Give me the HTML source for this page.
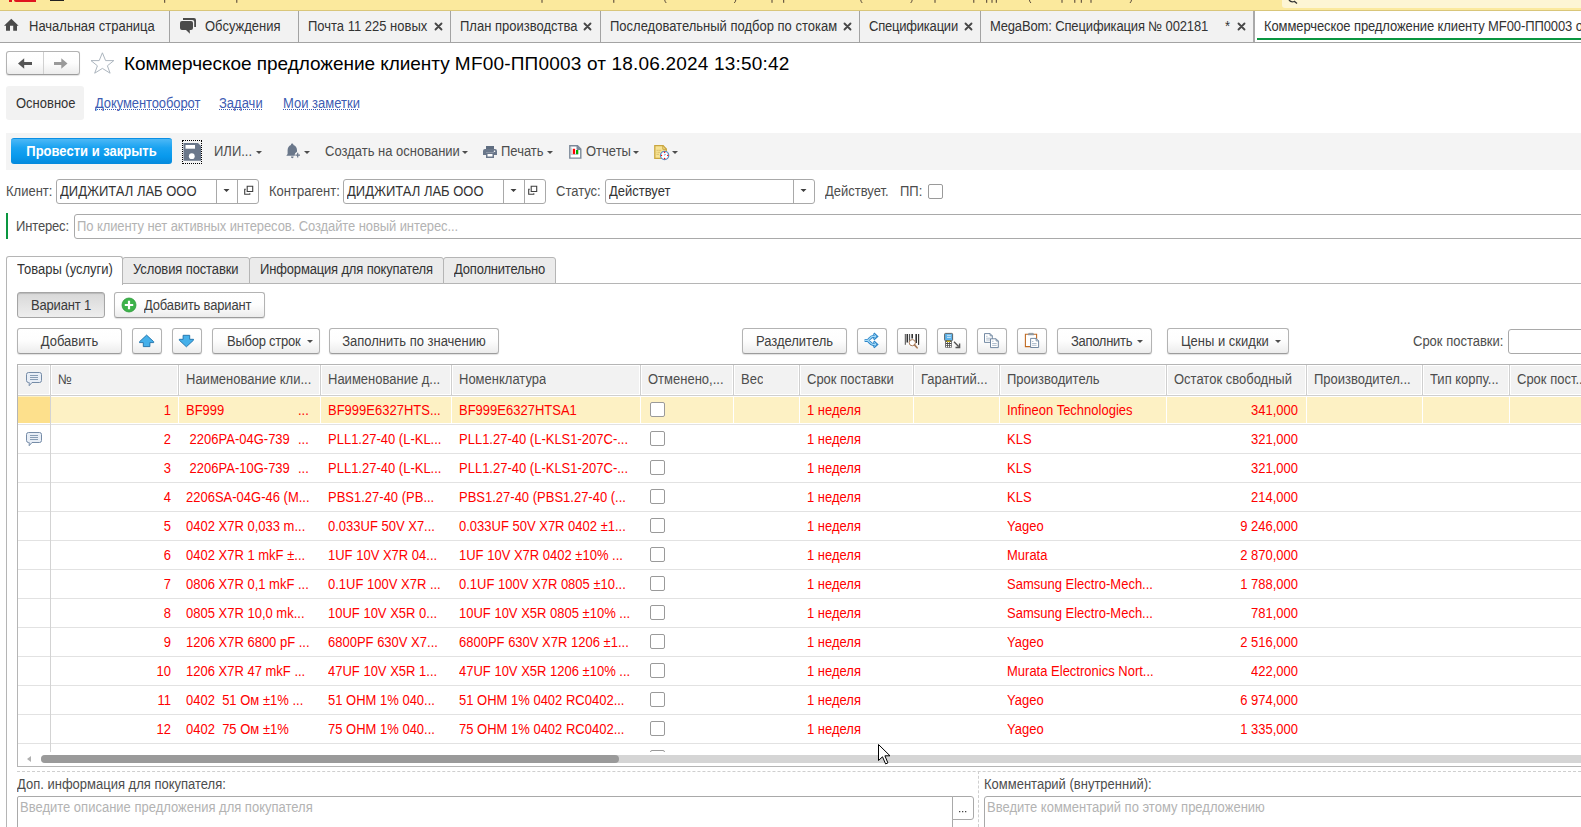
<!DOCTYPE html>
<html><head><meta charset="utf-8">
<style>
*{box-sizing:border-box;margin:0;padding:0}
html,body{width:1581px;height:827px;overflow:hidden;background:#fff;font-family:"Liberation Sans",sans-serif;font-size:13px;color:#4d4d4d}
.a{position:absolute;white-space:nowrap}
svg{position:absolute;overflow:visible}
#topbar{position:absolute;left:0;top:0;width:1581px;height:11px;background:#fbe99d;border-bottom:1px solid #d9c67a}
#tabs{position:absolute;left:0;top:11px;width:1581px;height:32px;background:#f2f2f2;border-bottom:1px solid #a3a3a3}
.tsep{position:absolute;top:0;width:1px;height:31px;background:#a3a3a3}
.ttext{position:absolute;top:8px;color:#333;white-space:nowrap;line-height:15px}
.tx{position:absolute;top:10px;width:10px;height:10px}
.btn{position:absolute;border:1px solid #b3b3b3;border-bottom-color:#9c9c9c;border-radius:3px;background:linear-gradient(#fff 0%,#fdfdfd 50%,#ececec 100%);box-shadow:0 1px 1px rgba(0,0,0,.12);color:#404040;white-space:nowrap;height:26px;line-height:24px;text-align:center}
.fld{position:absolute;border:1px solid #a9a9a9;border-radius:3px;background:#fff;color:#333;white-space:nowrap;height:25px;line-height:23px;padding-left:3px}
.lbl{position:absolute;white-space:nowrap;color:#4d4d4d;line-height:15px}
.lnk{position:absolute;white-space:nowrap;color:#3e5cb2;line-height:15px}
.lnk u{text-decoration:none}
.dot{position:absolute;height:1px;background:repeating-linear-gradient(90deg,#3e5cb2 0 1px,transparent 1px 2px)}
.dd{position:absolute;width:0;height:0;border-left:3px solid transparent;border-right:3px solid transparent;border-top:3px solid #4d4d4d}
.th{position:absolute;top:0;height:30px;line-height:30px;padding-left:7px;color:#4d4d4d;white-space:nowrap;overflow:hidden}
.vl{position:absolute;width:1px;background:#d9d9d9}
.row{position:absolute;left:0;width:1563px;height:29px;border-bottom:1px solid #e2e2e2}
.c{position:absolute;top:1px;height:28px;line-height:28px;color:#f00;white-space:pre;overflow:hidden}
.r{text-align:right}
.c,.lbl,.ttext,.th,.lnk,.t{transform:scaleY(1.07);transform-origin:0 calc(50% + 4.5px)}
.t{display:inline-block}
.btn .t{position:relative;top:1px}
.cb{position:absolute;width:14px;height:14px;border:1px solid #9a9a9a;border-radius:2px;background:#fff}
</style></head><body>
<div id="topbar"></div>
<svg style="left:0;top:0" width="1581" height="10" viewBox="0 0 1581 10"><path d="M164.7 0v2.8M236.8 0v2.8M542.0 0v2.8M613.8 0v2.8M935.0 0v2.8M973.8 0v2.8M986.7 0v2.8M992.0 0v2.8M996.3 0v2.8M1062.0 0v2.8M1074.8 0v2.8M1081.3 0v2.8M1091.0 0v2.8M772.0 0v2.8M783.7 0v2.8" stroke="#4a3a30" stroke-width="1" fill="none"/><path d="M664.7 0q0.4 2.2 1.6 3M860.7 0q0.4 2.2 1.6 3M1029.4 0q0.4 2.2 1.6 3M735.8 0q-0.4 2.2 -1.6 3M912.2 0q-0.4 2.2 -1.6 3M1131.5 0q-0.4 2.2 -1.6 3" stroke="#4a3a30" stroke-width="0.9" fill="none"/></svg>
<div style="position:absolute;left:1282px;top:0;width:299px;height:8px;background:#fdf5d4;border-radius:0 0 0 3px"></div>
<div style="position:absolute;left:9px;top:0;width:3px;height:2px;background:#e0141e"></div>
<div style="position:absolute;left:14px;top:0;width:22px;height:2px;background:#e0141e;border-radius:0 0 0 2px"></div>
<div style="position:absolute;left:50px;top:0;width:14px;height:1px;background:#222"></div>
<svg style="left:1288px;top:0" width="14" height="4" viewBox="0 0 14 4"><path d="M1 0Q3 2.5 6 1.5M6 1L9 3.5" stroke="#333" stroke-width="1.3" fill="none"/></svg>
<div id="tabs">
  <div class="tsep" style="left:169px"></div>
  <div class="tsep" style="left:298px"></div>
  <div class="tsep" style="left:450px"></div>
  <div class="tsep" style="left:600px"></div>
  <div class="tsep" style="left:859px"></div>
  <div class="tsep" style="left:980px"></div>
  <div class="tsep" style="left:1253px;width:2px;background:#a9a9a9"></div>
  <div style="position:absolute;left:1255px;top:0;width:326px;height:31px;background:#fff"></div>
  <div style="position:absolute;left:1257px;top:27px;width:324px;height:2px;background:#0a9640"></div>
  
  <svg style="left:0;top:0" width="20" height="31" viewBox="0 11 20 31"><path d="M4 25.8L11.3 18.7L18.6 25.8Z M6 25.5h4v5.3h-4z M13.2 25.5h3.8v5.3h-3.8z" fill="#4a4a4a"/></svg>
  <svg style="left:178px;top:0" width="20" height="31" viewBox="178 11 20 31"><path d="M183 18h11a2 2 0 0 1 2 2v7h-1.8v-5.2a1.8 1.8 0 0 0-1.8-1.8h-9.4z" fill="#4a4a4a"/><path d="M182 21h9a2 2 0 0 1 2 2v5a2 2 0 0 1-2 2h-1.3l0.2 3.8l-3.9-3.8h-4a2 2 0 0 1-2-2v-5a2 2 0 0 1 2-2z" fill="#4a4a4a"/></svg>
  <svg class="x" style="left:434px;top:11px" width="9" height="9" viewBox="0 0 9 9"><path d="M1.5 1.5L7.5 7.5M7.5 1.5L1.5 7.5" stroke="#474747" stroke-width="1.85" stroke-linecap="round"/></svg>
  <svg class="x" style="left:583px;top:11px" width="9" height="9" viewBox="0 0 9 9"><path d="M1.5 1.5L7.5 7.5M7.5 1.5L1.5 7.5" stroke="#474747" stroke-width="1.85" stroke-linecap="round"/></svg>
  <svg class="x" style="left:843px;top:11px" width="9" height="9" viewBox="0 0 9 9"><path d="M1.5 1.5L7.5 7.5M7.5 1.5L1.5 7.5" stroke="#474747" stroke-width="1.85" stroke-linecap="round"/></svg>
  <svg class="x" style="left:964px;top:11px" width="9" height="9" viewBox="0 0 9 9"><path d="M1.5 1.5L7.5 7.5M7.5 1.5L1.5 7.5" stroke="#474747" stroke-width="1.85" stroke-linecap="round"/></svg>
  <svg class="x" style="left:1237px;top:11px" width="9" height="9" viewBox="0 0 9 9"><path d="M1.5 1.5L7.5 7.5M7.5 1.5L1.5 7.5" stroke="#474747" stroke-width="1.85" stroke-linecap="round"/></svg>
  <div class="ttext" style="left:29px">Начальная страница</div>
  <div class="ttext" style="left:205px">Обсуждения</div>
  <div class="ttext" style="left:308px">Почта 11 225 новых</div>
  <div class="ttext" style="left:460px">План производства</div>
  <div class="ttext" style="left:610px">Последовательный подбор по стокам</div>
  <div class="ttext" style="left:869px;letter-spacing:-0.21px">Спецификации</div>
  <div class="ttext" style="left:990px;letter-spacing:-0.14px">MegaBom: Спецификация № 002181</div>
  <div class="ttext" style="left:1225px">*</div>
  <div class="ttext" style="left:1264px;letter-spacing:-0.1px">Коммерческое предложение клиенту MF00-ПП0003 от 18.06.2024 13:50:42</div>
</div>

<!-- title -->
<div class="btn" style="left:6px;top:51px;width:74px;height:24px"></div>
<div style="position:absolute;left:43px;top:52px;width:1px;height:22px;background:#d0d0d0"></div>
<svg style="left:0;top:0" width="130" height="80" viewBox="0 0 130 80">
<path d="M18 63.5L24.2 58.2V62H32V65H24.2V68.8Z" fill="#555"/>
<path d="M67.5 63.5L61.3 58.2V62H54V65H61.3V68.8Z" fill="#9a9a9a"/>
<path d="M102.4 52.8L105.6 60.6L113.8 60.6L107.4 65.8L110.1 73.2L102.4 68.4L94.7 73.2L97.4 65.8L91 60.6L99.2 60.6Z" fill="#fff" stroke="#a8b1bb" stroke-width="0.95" stroke-linejoin="miter"/>
</svg>
<div class="a" style="left:124px;top:53px;font-size:19px;color:#000"><span id="t1" style="letter-spacing:-0.045px">Коммерческое предложение клиенту </span><span id="t2" style="letter-spacing:0.19px">MF00-ПП0003 от 18.06.2024 13:50:42</span></div>

<!-- sections -->
<div style="position:absolute;left:6px;top:86px;width:78px;height:34px;background:#f2f2f2;border-radius:3px"></div>
<div class="lbl" style="left:16px;top:96px;color:#333">Основное</div>
<div class="lnk" style="left:95px;top:96px;letter-spacing:-0.1px"><u>Документооборот</u></div><div class="dot" style="left:95px;top:109px;width:104px"></div>
<div class="lnk" style="left:219px;top:96px"><u>Задачи</u></div><div class="dot" style="left:219px;top:109px;width:43px"></div>
<div class="lnk" style="left:283px;top:96px"><u>Мои заметки</u></div><div class="dot" style="left:283px;top:109px;width:76px"></div>

<!-- command bar -->
<div style="position:absolute;left:6px;top:133px;width:1575px;height:37px;background:#f4f4f4"></div>
<div class="a" style="left:11px;top:138px;width:161px;height:26px;border-radius:3px;border-top:1px solid #0b8fe4;background:linear-gradient(#4cb8f6 0%,#1aa3f1 35%,#0899ec 70%,#0589dc 100%);color:#fff;font-weight:bold;text-align:center;line-height:26px;font-size:13px"><span class="t" style="position:relative;top:0">Провести и закрыть</span></div>
<div style="position:absolute;left:182px;top:140px;width:20px;height:24px;border:1px dotted #000"></div>
<svg style="left:0;top:0" width="700" height="170" viewBox="0 0 700 170">
<path d="M183.5 143h14.5l3 3v14.8h-17.5z" fill="#6a778a"/>
<rect x="185.5" y="145" width="9.5" height="3.7" fill="#fff"/>
<circle cx="191.8" cy="156.2" r="2.9" fill="#fff"/>
<path d="M292 143.6c0.9 0 1.3 0.6 1.5 1.4c2.2 0.7 3.5 2.6 3.5 5.2v1.6c-0.9 0.4-1.8 1.3-2.2 2.4v1.6h-8.5l1.3-1.8v-3.8c0-2.6 1.3-4.5 3.3-5.2c0.2-0.8 0.5-1.4 1.1-1.4z M291 156.5h2.6c0 1-0.6 1.7-1.3 1.7s-1.3-0.7-1.3-1.7z" fill="#6a778a"/>
<path d="M297.7 152.8v4.6M295.4 155.1h4.6" stroke="#6a778a" stroke-width="1.2"/>
<path d="M486 146h8v3h-8z" fill="#5f6d80"/>
<path d="M485 149h10a2 2 0 0 1 2 2v4h-3v-2.2h-8v2.2h-3v-4a2 2 0 0 1 2-2z" fill="#6a778a"/>
<path d="M486 153h8v5h-8z" fill="#6a778a"/><rect x="487.5" y="154" width="5" height="2.5" fill="#fff"/>
<circle cx="494.5" cy="151.3" r="0.8" fill="#fff"/>
<path d="M569.8 145.8h7.7l3.3 3.3v9h-11z" fill="#fff" stroke="#7b8898" stroke-width="1.4"/>
<path d="M577 145.5v4h4" fill="#7b8898" stroke="#7b8898" stroke-width="1"/>
<rect x="572.8" y="148.8" width="2.3" height="5.4" fill="#f00"/><rect x="576" y="150" width="2.3" height="4.2" fill="#0a0"/>
<path d="M571.2 147.5v6.9h7" stroke="#8aa" stroke-width="0.6" fill="none"/>
<path d="M654.8 145.6h8.3l3.2 3.4v9.3h-11.5z" fill="#f7e394" stroke="#c9a640" stroke-width="1.3"/>
<path d="M662.8 145.5v3.8h3.6" fill="none" stroke="#c9a640" stroke-width="1"/>
<path d="M656.5 150.3h2M658.7 150.3h2.5M656.5 152.3h1M658 152.3h2M656.5 154.3h2.5" stroke="#d7bb66" stroke-width="0.9"/>
<circle cx="664.6" cy="155.4" r="4.1" fill="#fff" stroke="#5f8fc0" stroke-width="1.3"/>
<circle cx="664.6" cy="152.3" r="0.7" fill="#f00"/><circle cx="664.6" cy="158.5" r="0.7" fill="#f00"/><circle cx="661.5" cy="155.4" r="0.7" fill="#f00"/><circle cx="667.7" cy="155.4" r="0.7" fill="#f00"/>
<path d="M664.6 155.4v-1.6M664.6 155.4l1.4-1.4" stroke="#7aa3d6" stroke-width="0.7"/>
</svg>
<div class="lbl" style="left:214px;top:144px">ИЛИ...</div>
<div class="dd" style="left:256px;top:151px"></div>
<div class="dd" style="left:304px;top:151px"></div>
<div class="lbl" style="left:325px;top:144px">Создать на основании</div>
<div class="dd" style="left:462px;top:151px"></div>
<div class="lbl" style="left:501px;top:144px">Печать</div>
<div class="dd" style="left:547px;top:151px"></div>
<div class="lbl" style="left:586px;top:144px">Отчеты</div>
<div class="dd" style="left:633px;top:151px"></div>
<div class="dd" style="left:672px;top:151px"></div>

<!-- fields row -->
<div class="lbl" style="left:6px;top:184px">Клиент:</div>
<div class="fld" style="left:56px;top:179px;width:203px"><span class="t">ДИДЖИТАЛ ЛАБ ООО</span></div>
<div class="lbl" style="left:269px;top:184px">Контрагент:</div>
<div class="fld" style="left:343px;top:179px;width:203px"><span class="t">ДИДЖИТАЛ ЛАБ ООО</span></div>
<div class="lbl" style="left:556px;top:184px">Статус:</div>
<div class="fld" style="left:605px;top:179px;width:210px"><span class="t">Действует</span></div>
<div style="position:absolute;left:216px;top:180px;width:1px;height:23px;background:#a9a9a9"></div>
<div style="position:absolute;left:237px;top:180px;width:1px;height:23px;background:#a9a9a9"></div>
<div style="position:absolute;left:503px;top:180px;width:1px;height:23px;background:#a9a9a9"></div>
<div style="position:absolute;left:524px;top:180px;width:1px;height:23px;background:#a9a9a9"></div>
<div style="position:absolute;left:793px;top:180px;width:1px;height:23px;background:#a9a9a9"></div>
<svg style="left:0;top:0" width="820" height="210" viewBox="0 0 820 210">
<path d="M223.5 189h6l-3 3z M510.5 189h6l-3 3z M800.5 189h6l-3 3z" fill="#404040"/>
<path d="M247.2 186.3h5.5v5.2h-5.5z M531.2 186.3h5.5v5.2h-5.5z" fill="none" stroke="#404040" stroke-width="1.1"/>
<path d="M245.8 189.3h-1.1v5h5.1v-1.1 M529.8 189.3h-1.1v5h5.1v-1.1" fill="none" stroke="#404040" stroke-width="1.1"/>
</svg>
<div class="lbl" style="left:825px;top:184px">Действует.</div>
<div class="lbl" style="left:900px;top:184px">ПП:</div>
<div class="cb" style="left:928px;top:184px;width:15px;height:15px"></div>

<!-- interest -->
<div style="position:absolute;left:6px;top:213px;width:2px;height:26px;background:#0a9640"></div>
<div class="lbl" style="left:16px;top:219px;letter-spacing:-0.15px">Интерес:</div>
<div class="fld" style="left:74px;top:214px;width:1520px;color:#b3b3b3;padding-left:2px;letter-spacing:-0.09px"><span class="t">По клиенту нет активных интересов. Создайте новый интерес...</span></div>

<!-- page tabs -->
<div style="position:absolute;left:6px;top:283px;width:1575px;height:1px;background:#b5b5b5"></div>
<div style="position:absolute;left:6px;top:283px;width:1px;height:544px;background:#b5b5b5"></div>
<div style="position:absolute;left:122px;top:257px;width:128px;height:27px;background:#ebebeb;border:1px solid #b5b5b5;border-radius:3px 3px 0 0"></div>
<div style="position:absolute;left:249px;top:257px;width:195px;height:27px;background:#ebebeb;border:1px solid #b5b5b5;border-radius:3px 3px 0 0"></div>
<div style="position:absolute;left:443px;top:257px;width:113px;height:27px;background:#ebebeb;border:1px solid #b5b5b5;border-radius:3px 3px 0 0"></div>
<div style="position:absolute;left:6px;top:256px;width:117px;height:29px;background:#fff;border:1px solid #b5b5b5;border-bottom:none;border-radius:3px 3px 0 0"></div>
<div class="lbl" style="left:17px;top:262px;color:#333">Товары (услуги)</div>
<div class="lbl" style="left:133px;top:262px;color:#333;letter-spacing:-0.12px">Условия поставки</div>
<div class="lbl" style="left:260px;top:262px;color:#333;letter-spacing:-0.16px">Информация для покупателя</div>
<div class="lbl" style="left:454px;top:262px;color:#333;letter-spacing:-0.19px">Дополнительно</div>

<!-- variant buttons -->
<div class="btn" style="left:17px;top:292px;width:88px;background:linear-gradient(#d8d8d8,#eeeeee);border-color:#a5a5a5;box-shadow:inset 0 1px 1px rgba(0,0,0,.15);letter-spacing:-0.15px;color:#3a3a3a"><span class="t">Вариант 1</span></div>
<div class="btn" style="left:114px;top:292px;width:151px;text-align:left;padding-left:29px;letter-spacing:-0.16px"><span class="t">Добавить вариант</span></div>

<!-- table toolbar -->
<div class="btn" style="left:17px;top:328px;width:105px"><span class="t">Добавить</span></div>
<div class="btn" style="left:132px;top:328px;width:30px"></div>
<div class="btn" style="left:172px;top:328px;width:30px"></div>
<div class="btn" style="left:212px;top:328px;width:108px;text-align:left;padding-left:14px" ><span class="t"><span style="letter-spacing:-0.25px">Выбор строк</span></span></div>
<div class="dd" style="left:307px;top:340px"></div>
<div class="btn" style="left:329px;top:328px;width:170px"><span class="t">Заполнить по значению</span></div>
<div class="btn" style="left:742px;top:328px;width:105px"><span class="t">Разделитель</span></div>
<div class="btn" style="left:857px;top:328px;width:30px"></div>
<div class="btn" style="left:897px;top:328px;width:30px"></div>
<div class="btn" style="left:937px;top:328px;width:30px"></div>
<div class="btn" style="left:977px;top:328px;width:30px"></div>
<div class="btn" style="left:1017px;top:328px;width:30px"></div>
<div class="btn" style="left:1057px;top:328px;width:95px;text-align:left;padding-left:13px;letter-spacing:-0.3px"><span class="t">Заполнить</span></div>
<div class="dd" style="left:1137px;top:340px"></div>
<div class="btn" style="left:1167px;top:328px;width:122px;text-align:left;padding-left:13px"><span class="t">Цены и скидки</span></div>
<div class="dd" style="left:1275px;top:340px"></div>
<div class="lbl" style="left:1413px;top:334px">Срок поставки:</div>
<div class="fld" style="left:1508px;top:329px;width:100px"></div>

<svg style="left:0;top:0" width="1060" height="360" viewBox="0 0 1060 360">
<circle cx="129" cy="305" r="7" fill="#3cb34a" stroke="#2c9a3a" stroke-width="0.8"/>
<path d="M129 300.8v8.4M124.8 305h8.4" stroke="#fff" stroke-width="2.2"/>
<path d="M146.6 335.1L139.5 341.7V342.6H143.3V346.6H149.9V342.6H153.7V341.7Z" fill="#45b0ea" stroke="#1e6fa8" stroke-width="0.9" stroke-linejoin="round"/>
<path d="M186.4 346.8L179.3 340.2V339.3H183.1V335.3H189.7V339.3H193.5V340.2Z" fill="#45b0ea" stroke="#1e6fa8" stroke-width="0.9" stroke-linejoin="round"/>
<g transform="translate(857,328)">
<path d="M7.6 12.4H10.2C12.3 12.4 13.2 8.4 16 8.4H19M10.2 12.4C12.3 12.4 13.2 16.4 16 16.4H19" fill="none" stroke="#2f86c8" stroke-width="3"/>
<path d="M16.6 5.3L19.9 8.4L16.6 11.5M16.6 13.3L19.9 16.4L16.6 19.5" fill="none" stroke="#2f86c8" stroke-width="2.4" stroke-linejoin="miter"/>
<path d="M7.6 12.4H10.2C12.3 12.4 13.2 8.4 16 8.4H19M10.2 12.4C12.3 12.4 13.2 16.4 16 16.4H19" fill="none" stroke="#a6dcf8" stroke-width="1.2"/>
<path d="M16.6 5.9L19.2 8.4L16.6 10.9M16.6 13.9L19.2 16.4L16.6 18.9" fill="none" stroke="#a6dcf8" stroke-width="0.9" stroke-linejoin="miter"/>
</g>
<g transform="translate(897,328)">
<path d="M8.3 6v10.8M21.6 6v10.8M12.6 6v8.5M21.6 6v10.8" stroke="#333" stroke-width="0.9"/>
<path d="M10.3 6v8.5M15.2 6v4.6M19.2 6v9" stroke="#333" stroke-width="1.6"/>
<circle cx="15.3" cy="14.7" r="3.1" fill="#fff" stroke="#a87a58" stroke-width="1"/>
<path d="M17.5 16.9l2.6 2.9" stroke="#a87a58" stroke-width="1.6" stroke-linecap="round"/>
</g>
<g transform="translate(937,328)">
<rect x="7.6" y="5.4" width="8" height="7.2" rx="0.8" fill="#5db3ea" stroke="#555" stroke-width="0.9"/>
<path d="M10 7.3h3.8M10 9.4h3.8" stroke="#e8f4fc" stroke-width="0.8"/>
<rect x="8.2" y="12.8" width="6.6" height="6.9" rx="0.6" fill="#4a4a4a"/>
<rect x="9.7" y="12.8" width="3.6" height="1" fill="#f2d400"/>
<path d="M9.0 13.9h1.2v1.2h-1.2zM9.0 16.0h1.2v1.2h-1.2zM9.0 18.0h1.2v1.2h-1.2zM11.0 13.9h1.2v1.2h-1.2zM11.0 16.0h1.2v1.2h-1.2zM11.0 18.0h1.2v1.2h-1.2zM13.0 13.9h1.2v1.2h-1.2zM13.0 16.0h1.2v1.2h-1.2zM13.0 18.0h1.2v1.2h-1.2z" fill="#fff"/>
<path d="M17 13.8l4.6 4.6M22.6 15.4v4.1h-4.1" stroke="#555" stroke-width="1.4" fill="none"/>
</g>
<g transform="translate(977,328)">
<path d="M7.5 5.6h5.6l2.2 2.2v6.6h-7.8z" fill="#fff" stroke="#647d98" stroke-width="0.9"/><path d="M13.1 5.6v2.2h2.2" fill="none" stroke="#647d98" stroke-width="0.8"/>
<path d="M9.2 8.3h1.3M9.2 10.2h4.5M9.2 12h4.5" stroke="#8ea2b8" stroke-width="0.7"/>
<path d="M13.5 10.8h5.6l2.2 2.2v6.6h-7.8z" fill="#fff" stroke="#647d98" stroke-width="0.9"/><path d="M19.1 10.8v2.2h2.2" fill="none" stroke="#647d98" stroke-width="0.8"/>
<path d="M15.2 13.3h1.3M15.2 15.5h4.5M15.2 17.4h4.5" stroke="#8ea2b8" stroke-width="0.7"/>
</g>
<g transform="translate(1017,328)">
<path d="M8.4 6.3h11.2v12.3h-11.2z" fill="#fff" stroke="#c06a22" stroke-width="1.1"/>
<path d="M11.8 5.3h4.4l0.7 1.6h-5.8z" fill="#9aa4ad" stroke="#7c8790" stroke-width="0.5"/>
<path d="M13.6 10.4h5.5l2.5 2.5v6.6h-8z" fill="#fff" stroke="#647d98" stroke-width="0.9"/><path d="M19.1 10.4v2.5h2.5" fill="none" stroke="#647d98" stroke-width="0.8"/>
<path d="M15.1 13.5h1.3M15.1 15.5h4.5M15.1 17.3h4.5" stroke="#8ea2b8" stroke-width="0.7"/>
</g>
</svg>
<!-- table -->
<div id="tbl" style="position:absolute;left:17px;top:364px;width:1564px;height:403px;border:1px solid #b5b5b5;border-right:none;overflow:hidden">
  <div style="position:absolute;left:0;top:1px;width:1563px;height:28px;background:#f2f2f2"></div><div style="position:absolute;left:0;top:30px;width:1563px;height:1px;background:#cfcfcf"></div>
  <div id="rows">
<div class="th" style="left:33px">№</div>
<div class="th" style="left:161px">Наименование кли...</div>
<div class="th" style="left:303px">Наименование д...</div>
<div class="th" style="left:434px">Номенклатура</div>
<div class="th" style="left:623px">Отменено,...</div>
<div class="th" style="left:716px">Вес</div>
<div class="th" style="left:782px">Срок поставки</div>
<div class="th" style="left:896px">Гарантий...</div>
<div class="th" style="left:982px">Производитель</div>
<div class="th" style="left:1149px">Остаток свободный</div>
<div class="th" style="left:1289px">Производител...</div>
<div class="th" style="left:1405px">Тип корпу...</div>
<div class="th" style="left:1492px">Срок пост...</div>
<div class="vl" style="left:31px;top:0;height:30px;width:3px;background:#fff"></div>
<div class="vl" style="left:32px;top:0;height:30px;background:#cfcfcf"></div>
<div class="vl" style="left:159px;top:0;height:30px;width:3px;background:#fff"></div>
<div class="vl" style="left:160px;top:0;height:30px;background:#cfcfcf"></div>
<div class="vl" style="left:301px;top:0;height:30px;width:3px;background:#fff"></div>
<div class="vl" style="left:302px;top:0;height:30px;background:#cfcfcf"></div>
<div class="vl" style="left:432px;top:0;height:30px;width:3px;background:#fff"></div>
<div class="vl" style="left:433px;top:0;height:30px;background:#cfcfcf"></div>
<div class="vl" style="left:621px;top:0;height:30px;width:3px;background:#fff"></div>
<div class="vl" style="left:622px;top:0;height:30px;background:#cfcfcf"></div>
<div class="vl" style="left:714px;top:0;height:30px;width:3px;background:#fff"></div>
<div class="vl" style="left:715px;top:0;height:30px;background:#cfcfcf"></div>
<div class="vl" style="left:780px;top:0;height:30px;width:3px;background:#fff"></div>
<div class="vl" style="left:781px;top:0;height:30px;background:#cfcfcf"></div>
<div class="vl" style="left:894px;top:0;height:30px;width:3px;background:#fff"></div>
<div class="vl" style="left:895px;top:0;height:30px;background:#cfcfcf"></div>
<div class="vl" style="left:980px;top:0;height:30px;width:3px;background:#fff"></div>
<div class="vl" style="left:981px;top:0;height:30px;background:#cfcfcf"></div>
<div class="vl" style="left:1147px;top:0;height:30px;width:3px;background:#fff"></div>
<div class="vl" style="left:1148px;top:0;height:30px;background:#cfcfcf"></div>
<div class="vl" style="left:1287px;top:0;height:30px;width:3px;background:#fff"></div>
<div class="vl" style="left:1288px;top:0;height:30px;background:#cfcfcf"></div>
<div class="vl" style="left:1403px;top:0;height:30px;width:3px;background:#fff"></div>
<div class="vl" style="left:1404px;top:0;height:30px;background:#cfcfcf"></div>
<div class="vl" style="left:1490px;top:0;height:30px;width:3px;background:#fff"></div>
<div class="vl" style="left:1491px;top:0;height:30px;background:#cfcfcf"></div>
<svg style="left:8px;top:7px" width="17" height="15" viewBox="0 0 17 15"><path d="M2.5 0.5h11a2 2 0 0 1 2 2v6a2 2 0 0 1-2 2h-7.5l-2.8 3.2v-3.2h-0.7a2 2 0 0 1-2-2v-6a2 2 0 0 1 2-2z" fill="#e8eef6" stroke="#6f86a2" stroke-width="0.95"/><path d="M4 3.5h8M4 5.5h8M4 7.5h8" stroke="#7d93ad" stroke-width="0.9"/></svg>
<svg style="left:8px;top:67px" width="17" height="15" viewBox="0 0 17 15"><path d="M2.5 0.5h11a2 2 0 0 1 2 2v6a2 2 0 0 1-2 2h-7.5l-2.8 3.2v-3.2h-0.7a2 2 0 0 1-2-2v-6a2 2 0 0 1 2-2z" fill="#e8eef6" stroke="#6f86a2" stroke-width="0.95"/><path d="M4 3.5h8M4 5.5h8M4 7.5h8" stroke="#7d93ad" stroke-width="0.9"/></svg>
<div class="row" style="top:31px;background:#fdf1c4;">
<div style="position:absolute;left:0;top:1px;width:32px;height:26px;background:#fde08c"></div>
<div style="position:absolute;left:32px;top:0;width:1531px;height:1px;background:#fff"></div>
<div style="position:absolute;left:0;top:27px;width:1563px;height:1px;background:#fff"></div>
<div class="vl" style="left:160px;top:0;height:28px;background:#fff"></div>
<div class="vl" style="left:302px;top:0;height:28px;background:#fff"></div>
<div class="vl" style="left:433px;top:0;height:28px;background:#fff"></div>
<div class="vl" style="left:622px;top:0;height:28px;background:#fff"></div>
<div class="vl" style="left:715px;top:0;height:28px;background:#fff"></div>
<div class="vl" style="left:781px;top:0;height:28px;background:#fff"></div>
<div class="vl" style="left:895px;top:0;height:28px;background:#fff"></div>
<div class="vl" style="left:981px;top:0;height:28px;background:#fff"></div>
<div class="vl" style="left:1148px;top:0;height:28px;background:#fff"></div>
<div class="vl" style="left:1288px;top:0;height:28px;background:#fff"></div>
<div class="vl" style="left:1404px;top:0;height:28px;background:#fff"></div>
<div class="vl" style="left:1491px;top:0;height:28px;background:#fff"></div>
<div class="c r" style="left:32px;width:121px">1</div>
<div class="c" style="left:168px;width:132px">BF999</div>
<div class="c" style="left:280px">...</div>
<div class="c" style="left:310px;width:121px">BF999E6327HTS...</div>
<div class="c" style="left:441px;width:180px">BF999E6327HTSA1</div>
<div class="cb" style="left:632px;top:6px;width:15px;height:15px"></div>
<div class="c" style="left:789px">1 неделя</div>
<div class="c" style="left:989px;width:157px">Infineon Technologies</div>
<div class="c r" style="left:1149px;width:131px">341,000</div>
</div>
<div class="row" style="top:60px;">
<div class="c r" style="left:32px;width:121px">2</div>
<div class="c" style="left:168px;width:132px"> 2206PA-04G-739</div>
<div class="c" style="left:280px">...</div>
<div class="c" style="left:310px;width:121px">PLL1.27-40 (L-KL...</div>
<div class="c" style="left:441px;width:180px">PLL1.27-40 (L-KLS1-207C-...</div>
<div class="cb" style="left:632px;top:6px;width:15px;height:15px"></div>
<div class="c" style="left:789px">1 неделя</div>
<div class="c" style="left:989px;width:157px">KLS</div>
<div class="c r" style="left:1149px;width:131px">321,000</div>
</div>
<div class="row" style="top:89px;">
<div class="c r" style="left:32px;width:121px">3</div>
<div class="c" style="left:168px;width:132px"> 2206PA-10G-739</div>
<div class="c" style="left:280px">...</div>
<div class="c" style="left:310px;width:121px">PLL1.27-40 (L-KL...</div>
<div class="c" style="left:441px;width:180px">PLL1.27-40 (L-KLS1-207C-...</div>
<div class="cb" style="left:632px;top:6px;width:15px;height:15px"></div>
<div class="c" style="left:789px">1 неделя</div>
<div class="c" style="left:989px;width:157px">KLS</div>
<div class="c r" style="left:1149px;width:131px">321,000</div>
</div>
<div class="row" style="top:118px;">
<div class="c r" style="left:32px;width:121px">4</div>
<div class="c" style="left:168px;width:132px">2206SA-04G-46 (M...</div>
<div class="c" style="left:310px;width:121px">PBS1.27-40 (PB...</div>
<div class="c" style="left:441px;width:180px">PBS1.27-40 (PBS1.27-40 (...</div>
<div class="cb" style="left:632px;top:6px;width:15px;height:15px"></div>
<div class="c" style="left:789px">1 неделя</div>
<div class="c" style="left:989px;width:157px">KLS</div>
<div class="c r" style="left:1149px;width:131px">214,000</div>
</div>
<div class="row" style="top:147px;">
<div class="c r" style="left:32px;width:121px">5</div>
<div class="c" style="left:168px;width:132px">0402 X7R 0,033 m...</div>
<div class="c" style="left:310px;width:121px">0.033UF 50V X7...</div>
<div class="c" style="left:441px;width:180px">0.033UF 50V X7R 0402 ±1...</div>
<div class="cb" style="left:632px;top:6px;width:15px;height:15px"></div>
<div class="c" style="left:789px">1 неделя</div>
<div class="c" style="left:989px;width:157px">Yageo</div>
<div class="c r" style="left:1149px;width:131px">9 246,000</div>
</div>
<div class="row" style="top:176px;">
<div class="c r" style="left:32px;width:121px">6</div>
<div class="c" style="left:168px;width:132px">0402 X7R 1 mkF ±...</div>
<div class="c" style="left:310px;width:121px">1UF 10V X7R 04...</div>
<div class="c" style="left:441px;width:180px">1UF 10V X7R 0402 ±10% ...</div>
<div class="cb" style="left:632px;top:6px;width:15px;height:15px"></div>
<div class="c" style="left:789px">1 неделя</div>
<div class="c" style="left:989px;width:157px">Murata</div>
<div class="c r" style="left:1149px;width:131px">2 870,000</div>
</div>
<div class="row" style="top:205px;">
<div class="c r" style="left:32px;width:121px">7</div>
<div class="c" style="left:168px;width:132px">0806 X7R 0,1 mkF ...</div>
<div class="c" style="left:310px;width:121px">0.1UF 100V X7R ...</div>
<div class="c" style="left:441px;width:180px">0.1UF 100V X7R 0805 ±10...</div>
<div class="cb" style="left:632px;top:6px;width:15px;height:15px"></div>
<div class="c" style="left:789px">1 неделя</div>
<div class="c" style="left:989px;width:157px">Samsung Electro-Mech...</div>
<div class="c r" style="left:1149px;width:131px">1 788,000</div>
</div>
<div class="row" style="top:234px;">
<div class="c r" style="left:32px;width:121px">8</div>
<div class="c" style="left:168px;width:132px">0805 X7R 10,0 mk...</div>
<div class="c" style="left:310px;width:121px">10UF 10V X5R 0...</div>
<div class="c" style="left:441px;width:180px">10UF 10V X5R 0805 ±10% ...</div>
<div class="cb" style="left:632px;top:6px;width:15px;height:15px"></div>
<div class="c" style="left:789px">1 неделя</div>
<div class="c" style="left:989px;width:157px">Samsung Electro-Mech...</div>
<div class="c r" style="left:1149px;width:131px">781,000</div>
</div>
<div class="row" style="top:263px;">
<div class="c r" style="left:32px;width:121px">9</div>
<div class="c" style="left:168px;width:132px">1206 X7R 6800 pF ...</div>
<div class="c" style="left:310px;width:121px">6800PF 630V X7...</div>
<div class="c" style="left:441px;width:180px">6800PF 630V X7R 1206 ±1...</div>
<div class="cb" style="left:632px;top:6px;width:15px;height:15px"></div>
<div class="c" style="left:789px">1 неделя</div>
<div class="c" style="left:989px;width:157px">Yageo</div>
<div class="c r" style="left:1149px;width:131px">2 516,000</div>
</div>
<div class="row" style="top:292px;">
<div class="c r" style="left:32px;width:121px">10</div>
<div class="c" style="left:168px;width:132px">1206 X7R 47 mkF ...</div>
<div class="c" style="left:310px;width:121px">47UF 10V X5R 1...</div>
<div class="c" style="left:441px;width:180px">47UF 10V X5R 1206 ±10% ...</div>
<div class="cb" style="left:632px;top:6px;width:15px;height:15px"></div>
<div class="c" style="left:789px">1 неделя</div>
<div class="c" style="left:989px;width:157px">Murata Electronics Nort...</div>
<div class="c r" style="left:1149px;width:131px">422,000</div>
</div>
<div class="row" style="top:321px;">
<div class="c r" style="left:32px;width:121px">11</div>
<div class="c" style="left:168px;width:132px">0402  51 Ом ±1% ...</div>
<div class="c" style="left:310px;width:121px">51 OHM 1% 040...</div>
<div class="c" style="left:441px;width:180px">51 OHM 1% 0402 RC0402...</div>
<div class="cb" style="left:632px;top:6px;width:15px;height:15px"></div>
<div class="c" style="left:789px">1 неделя</div>
<div class="c" style="left:989px;width:157px">Yageo</div>
<div class="c r" style="left:1149px;width:131px">6 974,000</div>
</div>
<div class="row" style="top:350px;">
<div class="c r" style="left:32px;width:121px">12</div>
<div class="c" style="left:168px;width:132px">0402  75 Ом ±1%</div>
<div class="c" style="left:310px;width:121px">75 OHM 1% 040...</div>
<div class="c" style="left:441px;width:180px">75 OHM 1% 0402 RC0402...</div>
<div class="cb" style="left:632px;top:6px;width:15px;height:15px"></div>
<div class="c" style="left:789px">1 неделя</div>
<div class="c" style="left:989px;width:157px">Yageo</div>
<div class="c r" style="left:1149px;width:131px">1 335,000</div>
</div>
<div class="vl" style="left:32px;top:30px;height:357px;background:#d3d3d3"></div>
<div class="cb" style="left:632px;top:385px;width:15px;height:15px"></div>
<div style="position:absolute;left:0;top:387px;width:1563px;height:20px;background:#fff"></div>
<div style="position:absolute;left:23px;top:390px;width:1600px;height:8px;background:#d5d5d5;border-radius:4px 0 0 4px"></div>
<div style="position:absolute;left:23px;top:390px;width:578px;height:8px;background:#9a9a9a;border-radius:4px"></div>
<svg style="left:9px;top:391px" width="4" height="6" viewBox="0 0 4 6"><path d="M4 0V6L0 3Z" fill="#b0b0b0"/></svg>
</div>
</div>

<!-- bottom -->
<div style="position:absolute;left:17px;top:771px;width:1564px;height:0;border-top:1px dashed #cfcfcf"></div>
<div style="position:absolute;left:978px;top:771px;width:0;height:56px;border-left:1px dashed #cfcfcf"></div>
<div class="lbl" style="left:17px;top:777px">Доп. информация для покупателя:</div>
<div class="fld" style="left:17px;top:796px;width:936px;height:40px;color:#b3b3b3;line-height:22px;padding-left:2px;border-radius:2px 0 0 0"><span class="t">Введите описание предложения для покупателя</span></div>
<div style="position:absolute;left:952px;top:796px;width:22px;height:24px;border:1px solid #a9a9a9;border-radius:0 3px 3px 0;background:#fff"></div>
<svg style="left:0;top:0" width="980" height="820" viewBox="0 0 980 820"><path d="M959 811h1.3v1.3h-1.3zM962 811h1.3v1.3h-1.3zM965 811h1.3v1.3h-1.3z" fill="#444"/></svg>
<div class="lbl" style="left:984px;top:777px">Комментарий (внутренний):</div>
<div class="fld" style="left:984px;top:796px;width:620px;height:40px;color:#b3b3b3;line-height:22px;padding-left:2px"><span class="t">Введите комментарий по этому предложению</span></div>
<svg style="left:0;top:0" width="900" height="770" viewBox="0 0 900 770"><path d="M878.5 744.5L878.5 760.5L882.5 756.8L885.6 763.9L887.9 762.9L884.9 755.8L890 755.8Z" fill="#fff" stroke="#000" stroke-width="1" stroke-linejoin="miter"/></svg>
</body></html>
